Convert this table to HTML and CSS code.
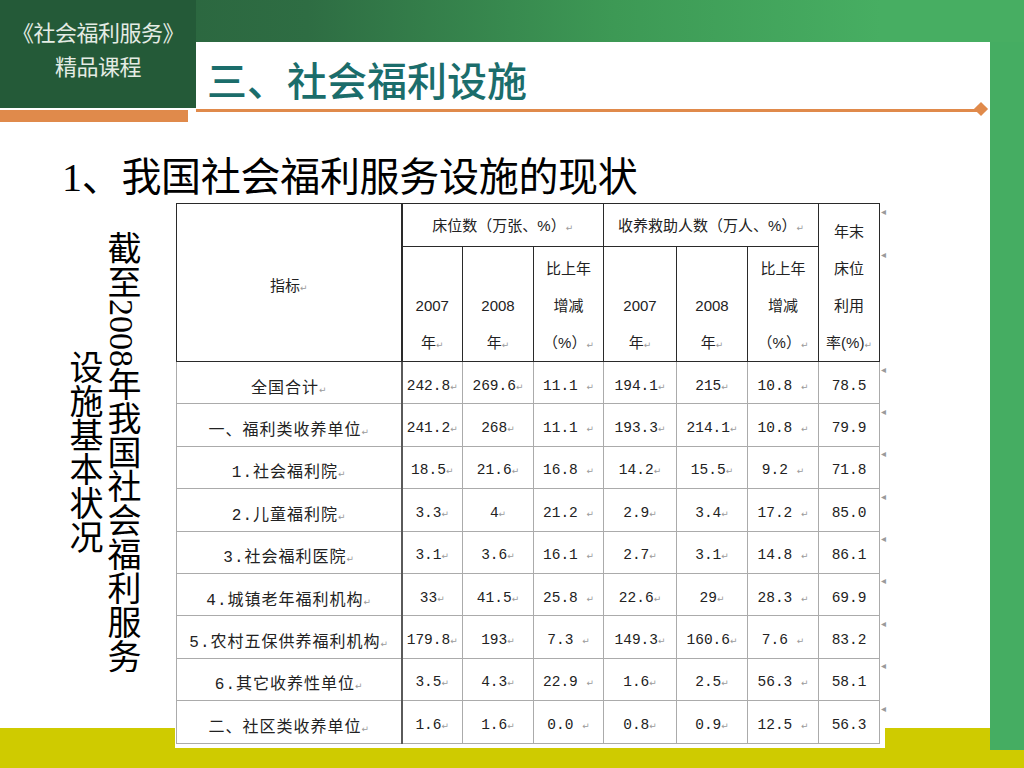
FILE: index.html
```html
<!DOCTYPE html>
<html lang="zh-CN">
<head>
<meta charset="utf-8">
<title>三、社会福利设施</title>
<link rel="stylesheet" href="styles.css">
</head>
<body>
<div class="slide">
  <header class="top">
    <div class="brand">
      <div class="brand-box">《社会福利服务》<br>精品课程</div>
      <div class="brand-bar"></div>
    </div>
    <div class="title-area">
      <h1 class="title">三、社会福利设施</h1>
      <div class="rule"></div>
    </div>
  </header>

  <main class="content">
    <h2 class="subtitle">1、我国社会福利服务设施的现状</h2>
    <div class="row">
      <div class="vtext">截至2008年我国社会福利服务<br>设施基本状况</div>
      <div class="table-wrap">
        <table class="data">
          <colgroup>
            <col class="c1"><col class="c2"><col class="c3"><col class="c4"><col class="c5"><col class="c6"><col class="c7"><col class="c8"><col class="cm">
          </colgroup>
          <thead>
            <tr class="h1">
              <th rowspan="2" class="mid key">指标<span class="p">↵</span></th>
              <th colspan="3" class="mid grp">床位数（万张、%）<span class="p">↵</span></th>
              <th colspan="3" class="mid grp">收养救助人数（万人、%）<span class="p">↵</span></th>
              <th rowspan="2"><div class="in">年末<br>床位<br>利用<br>率(%)<span class="p">↵</span></div></th>
              <td class="mark">◂</td>
            </tr>
            <tr class="h2">
              <th><div class="in">2007<br>年<span class="p">↵</span></div></th>
              <th><div class="in">2008<br>年<span class="p">↵</span></div></th>
              <th><div class="in">比上年<br>增减<br>（%）<span class="p">↵</span></div></th>
              <th><div class="in">2007<br>年<span class="p">↵</span></div></th>
              <th><div class="in">2008<br>年<span class="p">↵</span></div></th>
              <th><div class="in">比上年<br>增减<br>（%）<span class="p">↵</span></div></th>
              <td class="mark">◂</td>
            </tr>
          </thead>
          <tbody>
            <tr><td class="name">全国合计<span class="p">↵</span></td><td>242.8<span class="p">↵</span></td><td>269.6<span class="p">↵</span></td><td>11.1 <span class="p">↵</span></td><td>194.1<span class="p">↵</span></td><td>215<span class="p">↵</span></td><td>10.8 <span class="p">↵</span></td><td>78.5</td><td class="mark">◂</td></tr>
            <tr><td class="name">一、福利类收养单位<span class="p">↵</span></td><td>241.2<span class="p">↵</span></td><td>268<span class="p">↵</span></td><td>11.1 <span class="p">↵</span></td><td>193.3<span class="p">↵</span></td><td>214.1<span class="p">↵</span></td><td>10.8 <span class="p">↵</span></td><td>79.9</td><td class="mark">◂</td></tr>
            <tr><td class="name">1.社会福利院<span class="p">↵</span></td><td>18.5<span class="p">↵</span></td><td>21.6<span class="p">↵</span></td><td>16.8 <span class="p">↵</span></td><td>14.2<span class="p">↵</span></td><td>15.5<span class="p">↵</span></td><td>9.2 <span class="p">↵</span></td><td>71.8</td><td class="mark">◂</td></tr>
            <tr><td class="name">2.儿童福利院<span class="p">↵</span></td><td>3.3<span class="p">↵</span></td><td>4<span class="p">↵</span></td><td>21.2 <span class="p">↵</span></td><td>2.9<span class="p">↵</span></td><td>3.4<span class="p">↵</span></td><td>17.2 <span class="p">↵</span></td><td>85.0</td><td class="mark">◂</td></tr>
            <tr><td class="name">3.社会福利医院<span class="p">↵</span></td><td>3.1<span class="p">↵</span></td><td>3.6<span class="p">↵</span></td><td>16.1 <span class="p">↵</span></td><td>2.7<span class="p">↵</span></td><td>3.1<span class="p">↵</span></td><td>14.8 <span class="p">↵</span></td><td>86.1</td><td class="mark">◂</td></tr>
            <tr><td class="name">4.城镇老年福利机构<span class="p">↵</span></td><td>33<span class="p">↵</span></td><td>41.5<span class="p">↵</span></td><td>25.8 <span class="p">↵</span></td><td>22.6<span class="p">↵</span></td><td>29<span class="p">↵</span></td><td>28.3 <span class="p">↵</span></td><td>69.9</td><td class="mark">◂</td></tr>
            <tr><td class="name">5.农村五保供养福利机构<span class="p">↵</span></td><td>179.8<span class="p">↵</span></td><td>193<span class="p">↵</span></td><td>7.3 <span class="p">↵</span></td><td>149.3<span class="p">↵</span></td><td>160.6<span class="p">↵</span></td><td>7.6 <span class="p">↵</span></td><td>83.2</td><td class="mark">◂</td></tr>
            <tr><td class="name">6.其它收养性单位<span class="p">↵</span></td><td>3.5<span class="p">↵</span></td><td>4.3<span class="p">↵</span></td><td>22.9 <span class="p">↵</span></td><td>1.6<span class="p">↵</span></td><td>2.5<span class="p">↵</span></td><td>56.3 <span class="p">↵</span></td><td>58.1</td><td class="mark">◂</td></tr>
            <tr><td class="name">二、社区类收养单位<span class="p">↵</span></td><td>1.6<span class="p">↵</span></td><td>1.6<span class="p">↵</span></td><td>0.0 <span class="p">↵</span></td><td>0.8<span class="p">↵</span></td><td>0.9<span class="p">↵</span></td><td>12.5 <span class="p">↵</span></td><td>56.3</td><td class="mark">◂</td></tr>
          </tbody>
        </table>
      </div>
    </div>
  </main>
</div>
</body>
</html>
```

FILE: styles.css
```css
html, body {
  margin: 0;
  padding: 0;
}

body {
  font-family: "Noto Sans CJK SC", sans-serif;
  background: #fff;
}

.slide {
  width: 1024px;
  height: 768px;
  overflow: hidden;
  display: flex;
  flex-direction: column;
  background:
    linear-gradient(to right, #285f3b 0%, #2e6d43 30%, #3d9955 60%, #47ae62 86%, #47ae62 100%) top left / 100% 42px no-repeat,
    linear-gradient(#45ad62, #45ad62) right top / 34px 750px no-repeat,
    linear-gradient(#cfcb00, #cfcb00) left bottom / 100% 40px no-repeat,
    #ffffff;
}

/* header */
.top {
  display: flex;
  height: 122px;
  flex: none;
}

.brand {
  width: 196px;
  flex: none;
  display: flex;
  flex-direction: column;
}

.brand-box {
  height: 108px;
  background: #245a38;
  color: #e4ece4;
  font-size: 22px;
  line-height: 34px;
  text-align: center;
  padding-top: 14px;
  box-sizing: border-box;
  letter-spacing: -0.5px;
}

.brand-bar {
  width: 188px;
  height: 12px;
  margin-top: 2px;
  background: #e08a4b;
}

.title-area {
  width: 794px;
  margin-top: 42px;
  display: flex;
  flex-direction: column;
}

.title {
  margin: 0;
  height: 66px;
  background: #fff;
  box-sizing: border-box;
  padding: 8px 0 0 11px;
  font-size: 40px;
  line-height: 58px;
  font-weight: 500;
  color: #1b6d6b;
  font-family: "Noto Sans CJK SC", sans-serif;
}

.rule {
  position: relative;
  height: 3px;
  margin-top: 1px;
  width: 785px;
  background: #e08a4b;
}

.rule::after {
  content: "";
  position: absolute;
  right: -5px;
  top: -5px;
  width: 10px;
  height: 10px;
  background: #e08a4b;
  transform: rotate(45deg);
}

/* content */
.content {
  flex: 1;
  display: flex;
  flex-direction: column;
  padding-top: 33px;
}

.subtitle {
  margin: 0 0 0 62px;
  font-size: 40px;
  line-height: 45px;
  height: 45px;
  font-weight: normal;
  color: #000;
  font-family: "Liberation Serif", "Noto Sans CJK SC", serif;
  letter-spacing: -0.3px;
}

.row {
  display: flex;
  align-items: flex-start;
}

.vtext {
  writing-mode: vertical-rl;
  text-align: center;
  margin-left: 64px;
  margin-top: -8px;
  width: 76px;
  height: 520px;
  font-size: 34px;
  line-height: 38px;
  color: #000;
  font-family: "Liberation Serif", "Noto Sans CJK SC", serif;
}

.table-wrap {
  margin-left: 35px;
  background: #fff;
  padding: 3px 0 4px 1px;
}

.data {
  border-collapse: collapse;
  table-layout: fixed;
  width: 708px;
  font-family: "Liberation Mono", "Noto Sans CJK SC", monospace;
  color: #222;
}

.c1 { width: 225px; }
.c2 { width: 61px; }
.c3 { width: 71px; }
.c4 { width: 70px; }
.c5 { width: 73px; }
.c6 { width: 71px; }
.c7 { width: 71px; }
.c8 { width: 61px; }
.cm { width: 5px; }

.data th {
  border: 1px solid #2a2a2a;
  font-weight: normal;
  font-family: "Liberation Sans", "Noto Sans CJK SC", sans-serif;
  font-size: 15px;
  line-height: 37px;
  padding: 0;
  vertical-align: bottom;
  text-align: center;
  white-space: nowrap;
  overflow: hidden;
}

.data th .in {
  margin-bottom: -3px;
}

.data th.mid {
  vertical-align: middle;
  line-height: 20px;
}

.data th.key {
  padding-top: 8px;
  border-right: 2px solid #2a2a2a;
}

.data th.grp {
  padding-top: 4px;
}

.data tr.h1 { height: 43px; }
.data tr.h2 { height: 115px; }

.data tbody tr { height: 42.4px; }

.data td {
  border: 1px solid #ababab;
  padding: 0;
  text-align: center;
  vertical-align: middle;
  font-size: 14.5px;
  padding-top: 6px;
  white-space: nowrap;
  overflow: hidden;
  box-sizing: border-box;
}

.data td.name {
  font-size: 16px;
  letter-spacing: 1px;
  border-right: 2px solid #5a5a5a;
}

.data td.mark {
  border: none;
  padding: 3px 0 0 1px;
  vertical-align: top;
  text-align: left;
  font-size: 10px;
  line-height: 10px;
  color: #9a9a9a;
  overflow: visible;
  font-family: "DejaVu Sans", sans-serif;
}

.p {
  font-size: 9px;
  color: #9a9a9a;
  letter-spacing: 0;
  font-family: "DejaVu Sans", sans-serif;
}
```
